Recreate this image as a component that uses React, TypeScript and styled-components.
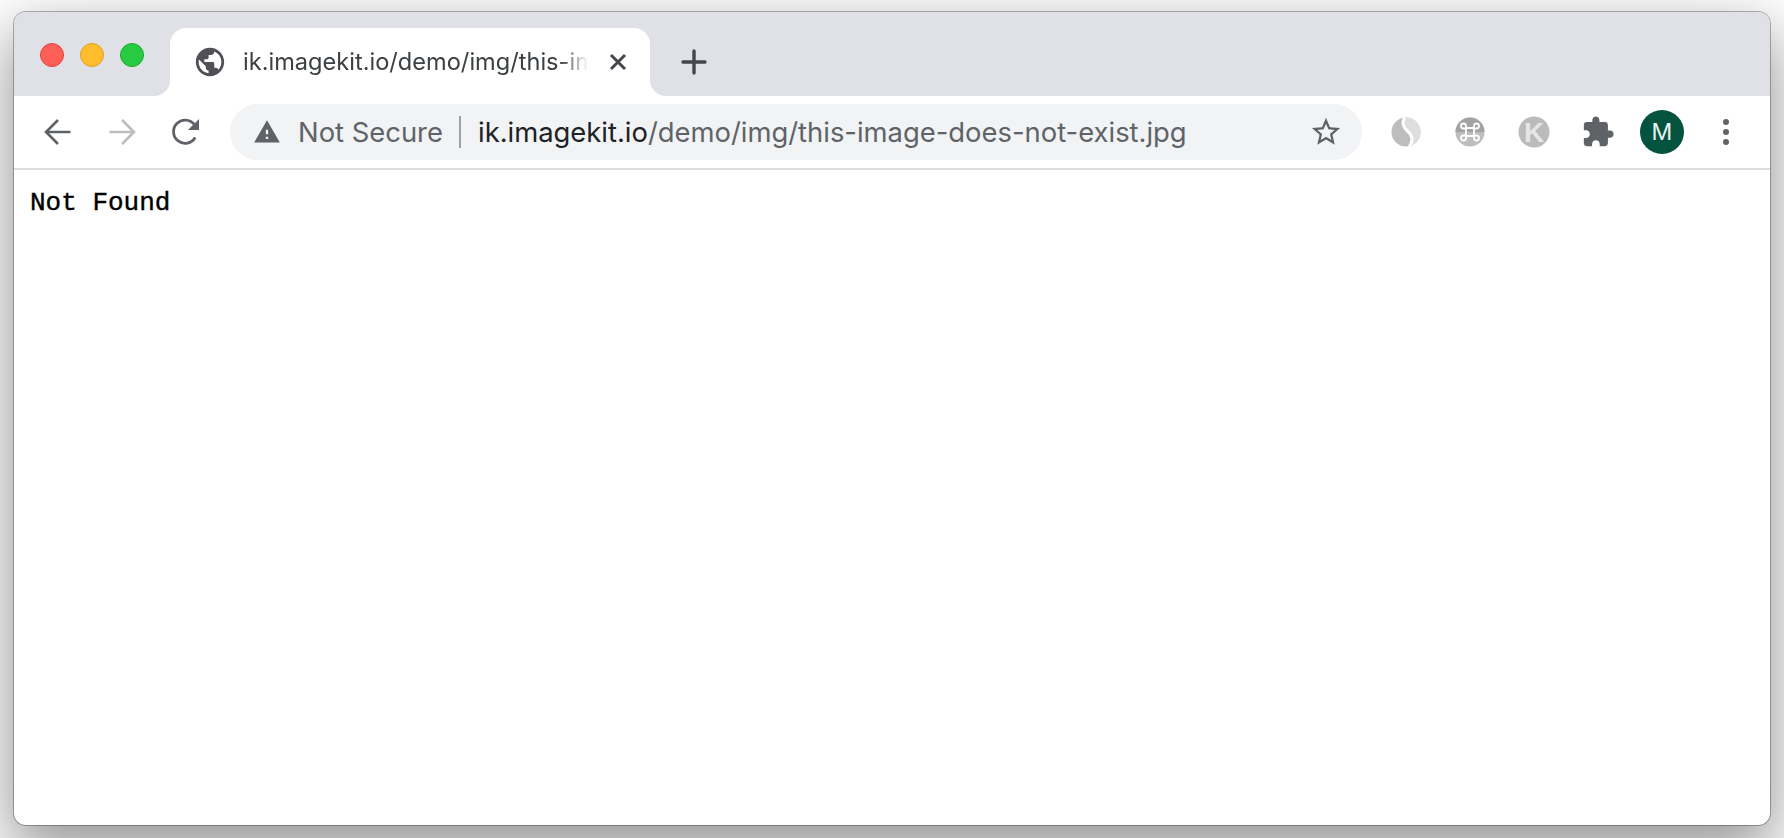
import React from "react";
import styled, { createGlobalStyle } from "styled-components";

const Global = createGlobalStyle`
  html, body { margin: 0; padding: 0; background: #fff; overflow: hidden; }
  body { width: 1784px; height: 838px; font-family: Inter, Roboto, "Liberation Sans", sans-serif; }
`;

const Stage = styled.div`
  width: 1784px;
  height: 838px;
  padding: 12px 14px 13px;
  box-sizing: border-box;
  overflow: hidden;
`;

const Win = styled.div`
  height: 100%;
  display: flex;
  flex-direction: column;
  background: #fff;
  border-radius: 12px;
  overflow: hidden;
  box-shadow: 0 0 0 1px rgba(0, 0, 0, 0.28), 0 22px 60px 4px rgba(0, 0, 0, 0.42);
`;

const Strip = styled.div`
  height: 84px;
  flex: none;
  background: #dfe1e6;
  display: flex;
  align-items: flex-end;
`;

const Lights = styled.div`
  width: 156px;
  height: 84px;
  flex: none;
  box-sizing: border-box;
  padding: 31px 0 0 26px;
  display: flex;
  gap: 16px;
`;

const Light = styled.span<{ $c: string; $b: string }>`
  width: 24px;
  height: 24px;
  box-sizing: border-box;
  border-radius: 50%;
  background: ${(p) => p.$c};
  border: 1px solid ${(p) => p.$b};
`;

const Tab = styled.div`
  position: relative;
  width: 480px;
  height: 68px;
  flex: none;
  background: #fff;
  border-radius: 16px 16px 0 0;
  display: flex;
  align-items: center;
  box-sizing: border-box;
  padding-left: 26px;

  &::before,
  &::after {
    content: "";
    position: absolute;
    bottom: 0;
    width: 16px;
    height: 16px;
  }
  &::before {
    left: -16px;
    background: radial-gradient(circle at 0 0, transparent 15.5px, #fff 16.5px);
  }
  &::after {
    right: -16px;
    background: radial-gradient(circle at 100% 0, transparent 15.5px, #fff 16.5px);
  }
`;

const TabIcon = styled.svg`
  width: 34px;
  height: 34px;
  flex: none;
  margin: 0 16px 0 -3px;
`;

const TabTitle = styled.div`
  width: 347px;
  flex: none;
  overflow: hidden;
  white-space: nowrap;
  font-size: 23.6px;
  line-height: 34px;
  color: #3c4043;
  -webkit-mask-image: linear-gradient(to right, #000 318px, transparent 345px);
  mask-image: linear-gradient(to right, #000 318px, transparent 345px);
`;

const CloseIcon = styled.svg`
  width: 24px;
  height: 24px;
  flex: none;
  margin-left: 16px;
`;

const NewTab = styled.svg`
  width: 28px;
  height: 28px;
  flex: none;
  margin: 0 0 20px 30px;
`;

const Toolbar = styled.div`
  height: 74px;
  flex: none;
  box-sizing: border-box;
  padding: 0 12px;
  background: #fff;
  display: flex;
  align-items: center;
  border-bottom: 2px solid #dadce0;
`;

const ToolBtn = styled.div`
  width: 64px;
  height: 56px;
  flex: none;
  display: flex;
  align-items: center;
  justify-content: center;
`;

const Omnibox = styled.div`
  flex: 1;
  height: 56px;
  margin: 0 12px;
  border-radius: 28px;
  background: #f1f3f4;
  display: flex;
  align-items: center;
  box-sizing: border-box;
  padding: 0 19px 0 23px;
`;

const Warn = styled.svg`
  width: 28px;
  height: 28px;
  flex: none;
`;

const Security = styled.span`
  width: 145px;
  flex: none;
  margin-left: 17px;
  font-size: 27.4px;
  line-height: 36px;
  color: #5f6368;
  white-space: nowrap;
`;

const Sep = styled.span`
  width: 2px;
  height: 32px;
  flex: none;
  margin: 0 17px 0 16px;
  background: #9aa0a6;
`;

const Url = styled.div`
  flex: 1;
  font-size: 27.4px;
  line-height: 36px;
  color: #5f6368;
  white-space: nowrap;
`;

const Host = styled.span`
  color: #202124;
`;

const Star = styled.svg`
  width: 34px;
  height: 34px;
  flex: none;
`;

const Avatar = styled.div`
  width: 44px;
  height: 44px;
  border-radius: 50%;
  background: #03533f;
  color: #eaf2ef;
  font-size: 23px;
  display: flex;
  align-items: center;
  justify-content: center;
`;

const Content = styled.main`
  flex: 1;
  padding: 18px 16px;
`;

const Mono = styled.pre`
  margin: 0;
  font-family: "Liberation Mono", "Courier New", monospace;
  font-size: 26px;
  line-height: 30px;
  color: #000;
  -webkit-text-stroke: 0.4px #000;
`;

const GLOBE =
  "M12 2C6.48 2 2 6.48 2 12s4.48 10 10 10 10-4.48 10-10S17.52 2 12 2zm-1 17.93c-3.95-.49-7-3.85-7-7.93 0-.62.08-1.21.21-1.79L9 15v1c0 1.1.9 2 2 2v1.93zm6.9-2.54c-.26-.81-1-1.39-1.9-1.39h-1v-3c0-.55-.45-1-1-1H8v-2h2c.55 0 1-.45 1-1V7h2c1.1 0 2-.9 2-2v-.41c2.93 1.19 5 4.06 5 7.41 0 2.08-.8 3.97-2.1 5.39z";

export default function App() {
  return (
    <Stage>
      <Global />
      <Win>
        <Strip>
          <Lights>
            <Light $c="#ff5f57" $b="#e0443e" />
            <Light $c="#ffbd2e" $b="#dea123" />
            <Light $c="#28ca42" $b="#1aab29" />
          </Lights>
          <Tab>
            <TabIcon viewBox="0 0 24 24">
              <path fill="#4f5157" d={GLOBE} />
            </TabIcon>
            <TabTitle>ik.imagekit.io/demo/img/this-image-does-not-exist.jpg</TabTitle>
            <CloseIcon viewBox="0 0 24 24">
              <path d="M5 5l14 14M19 5L5 19" stroke="#45474c" strokeWidth="3" fill="none" />
            </CloseIcon>
          </Tab>
          <NewTab viewBox="0 0 28 28">
            <path d="M14 3v22M3 14h22" stroke="#43464c" strokeWidth="3.4" strokeLinecap="round" fill="none" />
          </NewTab>
        </Strip>
        <Toolbar>
          <ToolBtn>
            <svg width="28" height="28" viewBox="0 0 28 28">
              <path d="M26.5 14H2.5M14 2L2 14l12 12" stroke="#5f6368" strokeWidth="2.6" fill="none" />
            </svg>
          </ToolBtn>
          <ToolBtn>
            <svg width="28" height="28" viewBox="0 0 28 28">
              <path d="M1.5 14h24M14 2l12 12-12 12" stroke="#bcbdc0" strokeWidth="2.6" fill="none" />
            </svg>
          </ToolBtn>
          <ToolBtn>
            <svg width="30" height="30" viewBox="0 0 30 30">
              <path d="M24.2 20.5A11.6 11.6 0 1 1 23.2 7.4" stroke="#5f6368" strokeWidth="2.8" fill="none" />
              <path d="M28 2v11H17z" fill="#5f6368" />
            </svg>
          </ToolBtn>
          <Omnibox>
            <Warn viewBox="0 0 24 24">
              <path fill="#5f6368" d="M1 21h22L12 2 1 21zm12-3h-2v-2h2v2zm0-4h-2v-4h2v4z" />
            </Warn>
            <Security>Not Secure</Security>
            <Sep />
            <Url>
              <Host>ik.imagekit.io</Host>/demo/img/this-image-does-not-exist.jpg
            </Url>
            <Star viewBox="0 0 24 24">
              <path fill="#5f6368" d="M22 9.24l-7.19-.62L12 2 9.19 8.63 2 9.24l5.46 4.73L5.82 21 12 17.27 18.18 21l-1.63-7.03L22 9.24zM12 15.4l-3.76 2.27 1-4.28-3.32-2.88 4.38-.38L12 6.1l1.71 4.04 4.38.38-3.32 2.88 1 4.28L12 15.4z" />
            </Star>
          </Omnibox>
          <ToolBtn>
            <svg width="30" height="30" viewBox="0 0 30 30">
              <defs>
                <clipPath id="s-round">
                  <circle cx="15" cy="15" r="14.5" />
                </clipPath>
              </defs>
              <g clipPath="url(#s-round)">
                <rect width="30" height="30" fill="#bdbdbd" />
                <path d="M14 0C10 6 13 11 17 14.500 21 18 23 23 18 30H30V0z" fill="#dedede" />
                <path d="M14 0C10 6 13 11 17 14.500 21 18 23 23 18 30" stroke="#fff" strokeWidth="3" fill="none" />
              </g>
            </svg>
          </ToolBtn>
          <ToolBtn>
            <svg width="30" height="30" viewBox="0 0 30 30">
              <circle cx="15" cy="15" r="14.5" fill="#bdbdbd" />
              <path d="M.5 15a14.500 14.500 0 0 1 29 0z" fill="#a3a3a3" />
              <path
                d="M11 11h8v8h-8zM11 11V9a2.500 2.500 0 1 0-2.500 2.500H11M19 11V9a2.500 2.500 0 1 1 2.500 2.500H19M11 19v2a2.500 2.500 0 1 1-2.500-2.500H11M19 19v2a2.500 2.500 0 1 0 2.500-2.500H19"
                stroke="#fff"
                strokeWidth="1.800"
                fill="none"
              />
            </svg>
          </ToolBtn>
          <ToolBtn>
            <svg width="32" height="32" viewBox="0 0 32 32">
              <circle cx="16" cy="16" r="15.500" fill="#bbb" />
              <text x="16" y="26" textAnchor="middle" fontFamily="Liberation Sans" fontWeight="700" fontSize="28" fill="#e6e6e6">K</text>
            </svg>
          </ToolBtn>
          <ToolBtn>
            <svg width="34" height="34" viewBox="0 0 24 24">
              <path fill="#5f6368" d="M20.500 11H19V7c0-1.100-.9-2-2-2h-4V3.500C13 2.120 11.880 1 10.500 1S8 2.120 8 3.500V5H4c-1.100 0-1.990.9-1.990 2v3.800H3.500c1.490 0 2.700 1.210 2.700 2.700s-1.210 2.700-2.700 2.700H2V20c0 1.100.9 2 2 2h3.800v-1.500c0-1.490 1.210-2.700 2.700-2.700 1.490 0 2.700 1.210 2.700 2.700V22H17c1.100 0 2-.9 2-2v-4h1.500c1.380 0 2.500-1.120 2.500-2.500S21.880 11 20.500 11z" />
            </svg>
          </ToolBtn>
          <ToolBtn>
            <Avatar>M</Avatar>
          </ToolBtn>
          <ToolBtn>
            <svg width="8" height="28" viewBox="0 0 8 28">
              <circle cx="4" cy="4" r="3" fill="#5f6368" />
              <circle cx="4" cy="14" r="3" fill="#5f6368" />
              <circle cx="4" cy="24" r="3" fill="#5f6368" />
            </svg>
          </ToolBtn>
        </Toolbar>
        <Content>
          <Mono>Not Found</Mono>
        </Content>
      </Win>
    </Stage>
  );
}
